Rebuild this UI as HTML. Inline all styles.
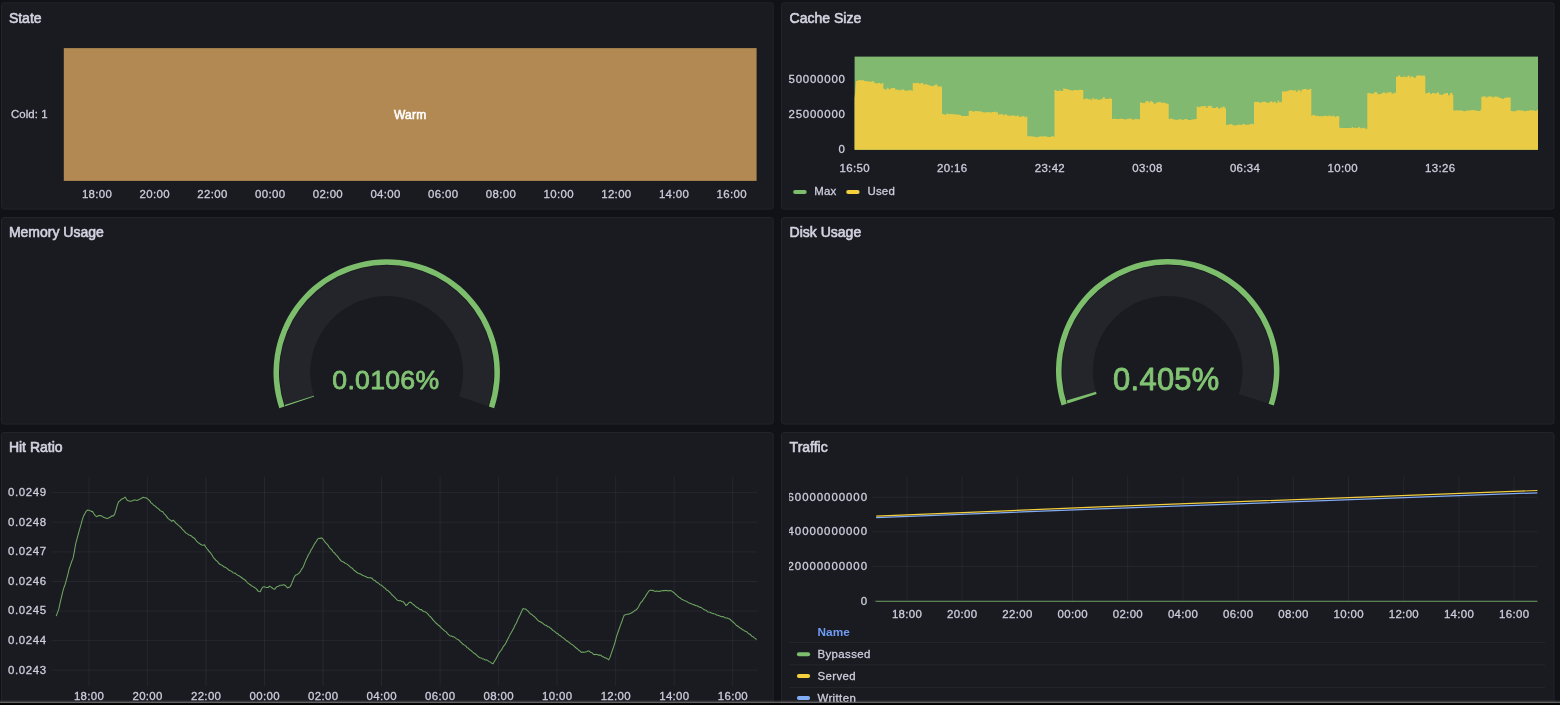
<!DOCTYPE html>
<html><head><meta charset="utf-8"><title>Dashboard</title>
<style>
html,body{margin:0;padding:0;background:#111217;width:1560px;height:705px;overflow:hidden;font-family:"Liberation Sans",sans-serif;}
svg{display:block;position:absolute;left:0;top:0;will-change:transform}
text{font-family:"Liberation Sans",sans-serif}
</style></head><body>
<svg width="1560" height="705" viewBox="0 0 1560 705" font-family="Liberation Sans, sans-serif">
<rect x="1.50" y="2.80" width="771.80" height="206.30" rx="2.5" fill="#1a1b20" stroke="#222429" stroke-width="1"/>
<rect x="1.50" y="217.50" width="771.80" height="206.60" rx="2.5" fill="#1a1b20" stroke="#222429" stroke-width="1"/>
<rect x="1.50" y="432.50" width="771.80" height="287.00" rx="2.5" fill="#1a1b20" stroke="#222429" stroke-width="1"/>
<rect x="781.50" y="2.80" width="772.60" height="206.30" rx="2.5" fill="#1a1b20" stroke="#222429" stroke-width="1"/>
<rect x="781.50" y="217.50" width="772.60" height="206.60" rx="2.5" fill="#1a1b20" stroke="#222429" stroke-width="1"/>
<rect x="781.50" y="432.50" width="772.60" height="287.00" rx="2.5" fill="#1a1b20" stroke="#222429" stroke-width="1"/>
<text x="8.90" y="22.80" font-size="14" fill="#d3d3e1" text-anchor="start" font-weight="normal" stroke="#d3d3e1" stroke-width="0.6">State</text>
<text x="789.60" y="22.80" font-size="14" fill="#d3d3e1" text-anchor="start" font-weight="normal" stroke="#d3d3e1" stroke-width="0.6">Cache Size</text>
<text x="8.90" y="237.40" font-size="14" fill="#d3d3e1" text-anchor="start" font-weight="normal" stroke="#d3d3e1" stroke-width="0.6">Memory Usage</text>
<text x="789.60" y="237.40" font-size="14" fill="#d3d3e1" text-anchor="start" font-weight="normal" stroke="#d3d3e1" stroke-width="0.6">Disk Usage</text>
<text x="8.90" y="452.40" font-size="14" fill="#d3d3e1" text-anchor="start" font-weight="normal" stroke="#d3d3e1" stroke-width="0.6">Hit Ratio</text>
<text x="789.60" y="452.40" font-size="14" fill="#d3d3e1" text-anchor="start" font-weight="normal" stroke="#d3d3e1" stroke-width="0.6">Traffic</text>
<rect x="63.8" y="48.1" width="692.8" height="132.8" fill="#b28952"/>
<text x="11.00" y="118.10" font-size="11.45" fill="#ccccdc" text-anchor="start" font-weight="normal" letter-spacing="0.05"  stroke="#ccccdc" stroke-width="0.3">Cold: 1</text>
<text x="410.23" y="118.80" font-size="12" fill="#ffffff" text-anchor="middle" font-weight="normal" letter-spacing="0.25" stroke="#ffffff" stroke-width="0.55">Warm</text>
<text x="97.08" y="198.10" font-size="11.45" fill="#ccccdc" text-anchor="middle" font-weight="normal" letter-spacing="0.35"  stroke="#ccccdc" stroke-width="0.3">18:00</text>
<text x="154.78" y="198.10" font-size="11.45" fill="#ccccdc" text-anchor="middle" font-weight="normal" letter-spacing="0.35"  stroke="#ccccdc" stroke-width="0.3">20:00</text>
<text x="212.48" y="198.10" font-size="11.45" fill="#ccccdc" text-anchor="middle" font-weight="normal" letter-spacing="0.35"  stroke="#ccccdc" stroke-width="0.3">22:00</text>
<text x="270.18" y="198.10" font-size="11.45" fill="#ccccdc" text-anchor="middle" font-weight="normal" letter-spacing="0.35"  stroke="#ccccdc" stroke-width="0.3">00:00</text>
<text x="327.88" y="198.10" font-size="11.45" fill="#ccccdc" text-anchor="middle" font-weight="normal" letter-spacing="0.35"  stroke="#ccccdc" stroke-width="0.3">02:00</text>
<text x="385.57" y="198.10" font-size="11.45" fill="#ccccdc" text-anchor="middle" font-weight="normal" letter-spacing="0.35"  stroke="#ccccdc" stroke-width="0.3">04:00</text>
<text x="443.28" y="198.10" font-size="11.45" fill="#ccccdc" text-anchor="middle" font-weight="normal" letter-spacing="0.35"  stroke="#ccccdc" stroke-width="0.3">06:00</text>
<text x="500.98" y="198.10" font-size="11.45" fill="#ccccdc" text-anchor="middle" font-weight="normal" letter-spacing="0.35"  stroke="#ccccdc" stroke-width="0.3">08:00</text>
<text x="558.67" y="198.10" font-size="11.45" fill="#ccccdc" text-anchor="middle" font-weight="normal" letter-spacing="0.35"  stroke="#ccccdc" stroke-width="0.3">10:00</text>
<text x="616.38" y="198.10" font-size="11.45" fill="#ccccdc" text-anchor="middle" font-weight="normal" letter-spacing="0.35"  stroke="#ccccdc" stroke-width="0.3">12:00</text>
<text x="674.07" y="198.10" font-size="11.45" fill="#ccccdc" text-anchor="middle" font-weight="normal" letter-spacing="0.35"  stroke="#ccccdc" stroke-width="0.3">14:00</text>
<text x="731.77" y="198.10" font-size="11.45" fill="#ccccdc" text-anchor="middle" font-weight="normal" letter-spacing="0.35"  stroke="#ccccdc" stroke-width="0.3">16:00</text>
<rect x="854.6" y="56.6" width="683.4" height="93.2" fill="#82b970"/>
<path d="M854.6,149.8 L854.6,98.7 L856.0,81.1 L857.9,81.1 L857.9,80.0 L859.3,80.0 L859.3,80.2 L861.7,80.2 L861.7,80.3 L864.1,80.3 L864.1,80.9 L866.5,80.9 L866.5,81.6 L867.9,81.6 L867.9,81.2 L869.3,81.2 L869.3,81.8 L871.7,81.8 L871.7,81.2 L874.1,81.2 L874.1,82.7 L875.5,82.7 L875.5,83.6 L877.9,83.6 L877.9,82.9 L880.3,82.9 L880.3,84.1 L881.7,84.1 L881.7,83.1 L883.1,83.1 L883.1,82.5 L883.3,82.5 L883.3,88.8 L884.7,88.8 L884.7,89.5 L887.1,89.5 L887.1,87.8 L888.5,87.8 L888.5,89.2 L890.9,89.2 L890.9,88.0 L892.8,88.0 L892.8,88.0 L895.2,88.0 L895.2,89.6 L896.6,89.6 L896.6,89.8 L898.5,89.8 L898.5,90.2 L900.4,90.2 L900.4,89.8 L902.3,89.8 L902.3,89.4 L904.2,89.4 L904.2,90.6 L905.6,90.6 L905.6,90.7 L908.0,90.7 L908.0,90.3 L909.4,90.3 L909.4,90.2 L911.8,90.2 L911.8,90.9 L912.7,90.9 L912.7,83.1 L914.6,83.1 L914.6,83.2 L917.0,83.2 L917.0,82.8 L918.9,82.8 L918.9,83.7 L920.8,83.7 L920.8,83.0 L923.2,83.0 L923.2,84.5 L925.6,84.5 L925.6,84.2 L927.5,84.2 L927.5,85.1 L929.4,85.1 L929.4,85.8 L931.8,85.8 L931.8,86.2 L933.2,86.2 L933.2,85.4 L935.1,85.4 L935.1,84.6 L937.5,84.6 L937.5,86.5 L939.9,86.5 L939.9,86.4 L942.0,86.4 L942.0,114.1 L944.4,114.1 L944.4,114.8 L946.3,114.8 L946.3,113.6 L948.2,113.6 L948.2,114.3 L950.1,114.3 L950.1,114.0 L952.5,114.0 L952.5,114.3 L953.9,114.3 L953.9,114.3 L955.8,114.3 L955.8,114.8 L957.2,114.8 L957.2,114.4 L959.1,114.4 L959.1,115.1 L961.0,115.1 L961.0,115.9 L962.9,115.9 L962.9,116.0 L964.8,116.0 L964.8,115.9 L966.7,115.9 L966.7,116.0 L968.6,116.0 L968.6,116.6 L968.7,116.6 L968.7,111.1 L970.1,111.1 L970.1,110.8 L972.5,110.8 L972.5,111.8 L974.4,111.8 L974.4,111.1 L975.8,111.1 L975.8,110.9 L977.2,110.9 L977.2,111.3 L979.6,111.3 L979.6,111.4 L982.0,111.4 L982.0,112.0 L983.4,112.0 L983.4,112.5 L985.8,112.5 L985.8,112.2 L988.2,112.2 L988.2,112.0 L989.6,112.0 L989.6,112.5 L992.0,112.5 L992.0,112.0 L993.9,112.0 L993.9,111.7 L995.8,111.7 L995.8,112.2 L998.0,112.2 L998.0,114.6 L999.4,114.6 L999.4,114.2 L1000.8,114.2 L1000.8,114.2 L1003.2,114.2 L1003.2,115.2 L1004.6,115.2 L1004.6,114.6 L1007.0,114.6 L1007.0,115.6 L1008.9,115.6 L1008.9,116.1 L1010.3,116.1 L1010.3,115.5 L1012.7,115.5 L1012.7,115.5 L1015.1,115.5 L1015.1,116.2 L1017.0,116.2 L1017.0,115.6 L1018.9,115.6 L1018.9,117.1 L1020.8,117.1 L1020.8,116.5 L1022.7,116.5 L1022.7,116.1 L1024.6,116.1 L1024.6,117.2 L1026.0,117.2 L1026.0,116.6 L1027.3,116.6 L1027.3,136.3 L1029.7,136.3 L1029.7,136.3 L1032.1,136.3 L1032.1,136.6 L1034.5,136.6 L1034.5,136.9 L1035.9,136.9 L1035.9,137.3 L1037.8,137.3 L1037.8,136.8 L1039.2,136.8 L1039.2,136.6 L1041.1,136.6 L1041.1,136.3 L1042.5,136.3 L1042.5,136.6 L1043.9,136.6 L1043.9,136.3 L1046.3,136.3 L1046.3,136.8 L1047.7,136.8 L1047.7,137.1 L1049.1,137.1 L1049.1,137.0 L1051.0,137.0 L1051.0,136.2 L1052.4,136.2 L1052.4,136.4 L1054.3,136.4 L1054.3,137.4 L1054.5,137.4 L1054.5,90.0 L1056.4,90.0 L1056.4,91.1 L1058.8,91.1 L1058.8,90.6 L1060.7,90.6 L1060.7,91.0 L1063.1,91.0 L1063.1,88.6 L1065.0,88.6 L1065.0,88.9 L1066.4,88.9 L1066.4,89.1 L1067.8,89.1 L1067.8,89.8 L1069.7,89.8 L1069.7,90.3 L1072.1,90.3 L1072.1,90.4 L1074.0,90.4 L1074.0,90.1 L1075.9,90.1 L1075.9,90.1 L1077.3,90.1 L1077.3,90.2 L1078.7,90.2 L1078.7,89.8 L1081.1,89.8 L1081.1,90.0 L1083.0,90.0 L1083.0,89.7 L1083.3,89.7 L1083.3,99.3 L1085.2,99.3 L1085.2,98.5 L1087.6,98.5 L1087.6,99.3 L1089.5,99.3 L1089.5,99.2 L1090.9,99.2 L1090.9,99.9 L1092.3,99.9 L1092.3,97.7 L1093.7,97.7 L1093.7,99.3 L1095.6,99.3 L1095.6,98.8 L1097.0,98.8 L1097.0,99.7 L1099.4,99.7 L1099.4,99.6 L1101.8,99.6 L1101.8,98.5 L1103.2,98.5 L1103.2,97.1 L1104.6,97.1 L1104.6,98.7 L1107.0,98.7 L1107.0,98.9 L1109.4,98.9 L1109.4,98.1 L1110.8,98.1 L1110.8,99.0 L1112.0,99.0 L1112.0,119.1 L1113.4,119.1 L1113.4,118.8 L1115.8,118.8 L1115.8,118.9 L1118.2,118.9 L1118.2,119.0 L1120.6,119.0 L1120.6,118.5 L1122.0,118.5 L1122.0,118.9 L1124.4,118.9 L1124.4,119.4 L1126.3,119.4 L1126.3,119.0 L1128.7,119.0 L1128.7,118.6 L1131.1,118.6 L1131.1,119.2 L1132.5,119.2 L1132.5,119.7 L1133.9,119.7 L1133.9,119.3 L1135.3,119.3 L1135.3,118.7 L1136.7,118.7 L1136.7,119.3 L1138.6,119.3 L1138.6,119.3 L1140.0,119.3 L1140.0,102.4 L1141.9,102.4 L1141.9,102.9 L1143.8,102.9 L1143.8,103.2 L1145.2,103.2 L1145.2,101.6 L1146.6,101.6 L1146.6,101.1 L1148.5,101.1 L1148.5,102.4 L1149.9,102.4 L1149.9,101.2 L1152.3,101.2 L1152.3,102.3 L1153.7,102.3 L1153.7,103.7 L1156.1,103.7 L1156.1,102.5 L1158.5,102.5 L1158.5,102.0 L1160.9,102.0 L1160.9,102.7 L1163.3,102.7 L1163.3,102.7 L1165.2,102.7 L1165.2,103.2 L1166.6,103.2 L1166.6,103.8 L1168.5,103.8 L1168.5,103.6 L1168.7,103.6 L1168.7,119.1 L1170.1,119.1 L1170.1,118.4 L1172.0,118.4 L1172.0,119.0 L1173.4,119.0 L1173.4,119.4 L1174.8,119.4 L1174.8,119.8 L1176.2,119.8 L1176.2,119.9 L1177.6,119.9 L1177.6,119.5 L1180.0,119.5 L1180.0,119.0 L1181.4,119.0 L1181.4,120.1 L1182.8,120.1 L1182.8,119.8 L1184.2,119.8 L1184.2,119.3 L1185.6,119.3 L1185.6,119.0 L1187.5,119.0 L1187.5,120.0 L1189.9,120.0 L1189.9,119.9 L1191.3,119.9 L1191.3,119.5 L1193.7,119.5 L1193.7,119.2 L1195.6,119.2 L1195.6,119.1 L1196.7,119.1 L1196.7,106.8 L1198.6,106.8 L1198.6,107.2 L1200.5,107.2 L1200.5,106.3 L1202.4,106.3 L1202.4,106.2 L1204.8,106.2 L1204.8,105.9 L1206.2,105.9 L1206.2,108.1 L1207.6,108.1 L1207.6,105.9 L1209.0,105.9 L1209.0,105.8 L1210.9,105.8 L1210.9,106.5 L1212.3,106.5 L1212.3,107.9 L1213.7,107.9 L1213.7,108.0 L1216.1,108.0 L1216.1,107.0 L1218.0,107.0 L1218.0,108.4 L1220.4,108.4 L1220.4,107.4 L1222.8,107.4 L1222.8,106.4 L1224.7,106.4 L1224.7,108.3 L1226.0,108.3 L1226.0,124.7 L1227.4,124.7 L1227.4,125.0 L1228.8,125.0 L1228.8,124.2 L1230.7,124.2 L1230.7,124.1 L1232.1,124.1 L1232.1,124.7 L1233.5,124.7 L1233.5,125.5 L1235.4,125.5 L1235.4,125.3 L1237.3,125.3 L1237.3,124.8 L1239.2,124.8 L1239.2,124.6 L1240.6,124.6 L1240.6,125.2 L1242.0,125.2 L1242.0,124.2 L1243.4,124.2 L1243.4,124.0 L1244.8,124.0 L1244.8,124.7 L1246.7,124.7 L1246.7,124.8 L1249.1,124.8 L1249.1,124.3 L1251.0,124.3 L1251.0,123.8 L1253.4,123.8 L1253.4,124.7 L1254.0,124.7 L1254.0,101.9 L1255.9,101.9 L1255.9,102.1 L1258.3,102.1 L1258.3,101.9 L1259.7,101.9 L1259.7,103.0 L1261.1,103.0 L1261.1,102.3 L1262.5,102.3 L1262.5,101.7 L1264.9,101.7 L1264.9,101.9 L1266.8,101.9 L1266.8,103.0 L1268.7,103.0 L1268.7,102.2 L1270.6,102.2 L1270.6,101.3 L1272.0,101.3 L1272.0,102.3 L1274.4,102.3 L1274.4,101.4 L1275.8,101.4 L1275.8,102.9 L1277.7,102.9 L1277.7,100.4 L1279.1,100.4 L1279.1,102.2 L1281.5,102.2 L1281.5,101.4 L1282.0,101.4 L1282.0,91.6 L1283.4,91.6 L1283.4,91.5 L1285.8,91.5 L1285.8,91.2 L1287.7,91.2 L1287.7,90.4 L1290.1,90.4 L1290.1,90.0 L1292.0,90.0 L1292.0,90.6 L1293.9,90.6 L1293.9,90.3 L1295.8,90.3 L1295.8,91.7 L1297.7,91.7 L1297.7,90.0 L1300.1,90.0 L1300.1,91.5 L1301.5,91.5 L1301.5,89.5 L1303.4,89.5 L1303.4,88.9 L1304.8,88.9 L1304.8,89.0 L1306.7,89.0 L1306.7,90.0 L1308.6,90.0 L1308.6,89.3 L1310.0,89.3 L1310.0,88.8 L1311.3,88.8 L1311.3,115.7 L1312.7,115.7 L1312.7,114.8 L1314.6,114.8 L1314.6,115.8 L1316.5,115.8 L1316.5,115.7 L1317.9,115.7 L1317.9,116.2 L1320.3,116.2 L1320.3,116.0 L1321.7,116.0 L1321.7,116.2 L1324.1,116.2 L1324.1,115.7 L1326.5,115.7 L1326.5,116.2 L1328.4,116.2 L1328.4,115.4 L1330.3,115.4 L1330.3,116.2 L1332.7,116.2 L1332.7,115.4 L1334.1,115.4 L1334.1,116.7 L1336.5,116.7 L1336.5,116.1 L1338.9,116.1 L1338.9,116.7 L1339.3,116.7 L1339.3,127.8 L1340.7,127.8 L1340.7,128.0 L1343.1,128.0 L1343.1,128.1 L1344.5,128.1 L1344.5,128.1 L1346.9,128.1 L1346.9,128.0 L1349.3,128.0 L1349.3,128.0 L1351.7,128.0 L1351.7,127.1 L1353.1,127.1 L1353.1,128.1 L1354.5,128.1 L1354.5,127.7 L1355.9,127.7 L1355.9,128.0 L1357.8,128.0 L1357.8,127.3 L1360.2,127.3 L1360.2,128.3 L1362.6,128.3 L1362.6,127.8 L1364.5,127.8 L1364.5,128.6 L1366.4,128.6 L1366.4,128.9 L1367.3,128.9 L1367.3,93.0 L1369.7,93.0 L1369.7,93.4 L1372.1,93.4 L1372.1,93.7 L1374.0,93.7 L1374.0,92.2 L1375.9,92.2 L1375.9,92.3 L1377.3,92.3 L1377.3,94.2 L1379.7,94.2 L1379.7,93.9 L1381.6,93.9 L1381.6,93.0 L1383.0,93.0 L1383.0,92.6 L1385.4,92.6 L1385.4,93.5 L1386.8,93.5 L1386.8,92.4 L1389.2,92.4 L1389.2,92.3 L1391.6,92.3 L1391.6,93.7 L1393.5,93.7 L1393.5,92.8 L1395.9,92.8 L1395.9,92.4 L1396.0,92.4 L1396.0,76.7 L1397.9,76.7 L1397.9,75.5 L1400.3,75.5 L1400.3,77.0 L1401.7,77.0 L1401.7,77.1 L1403.6,77.1 L1403.6,76.4 L1405.5,76.4 L1405.5,77.2 L1407.4,77.2 L1407.4,75.7 L1409.8,75.7 L1409.8,77.6 L1411.2,77.6 L1411.2,75.9 L1412.6,75.9 L1412.6,77.3 L1414.0,77.3 L1414.0,77.7 L1415.9,77.7 L1415.9,75.7 L1417.8,75.7 L1417.8,75.3 L1419.2,75.3 L1419.2,75.5 L1420.6,75.5 L1420.6,75.8 L1423.0,75.8 L1423.0,75.5 L1424.9,75.5 L1424.9,76.4 L1425.3,76.4 L1425.3,93.4 L1426.7,93.4 L1426.7,93.1 L1428.6,93.1 L1428.6,92.2 L1430.0,92.2 L1430.0,94.0 L1431.9,94.0 L1431.9,93.1 L1433.8,93.1 L1433.8,93.4 L1435.2,93.4 L1435.2,93.2 L1437.1,93.2 L1437.1,92.4 L1439.0,92.4 L1439.0,94.6 L1440.9,94.6 L1440.9,94.9 L1442.3,94.9 L1442.3,94.4 L1443.7,94.4 L1443.7,93.4 L1446.1,93.4 L1446.1,92.9 L1448.0,92.9 L1448.0,95.3 L1449.9,95.3 L1449.9,93.0 L1452.3,93.0 L1452.3,94.8 L1453.3,94.8 L1453.3,110.6 L1454.7,110.6 L1454.7,110.4 L1457.1,110.4 L1457.1,110.3 L1458.5,110.3 L1458.5,110.6 L1460.4,110.6 L1460.4,110.2 L1462.3,110.2 L1462.3,111.1 L1464.2,111.1 L1464.2,111.2 L1466.1,111.2 L1466.1,110.4 L1468.5,110.4 L1468.5,110.6 L1470.9,110.6 L1470.9,109.9 L1473.3,109.9 L1473.3,110.3 L1475.7,110.3 L1475.7,110.8 L1478.1,110.8 L1478.1,111.0 L1480.5,111.0 L1480.5,109.7 L1481.3,109.7 L1481.3,96.8 L1483.7,96.8 L1483.7,96.2 L1485.6,96.2 L1485.6,97.5 L1487.5,97.5 L1487.5,96.4 L1489.9,96.4 L1489.9,96.5 L1492.3,96.5 L1492.3,97.5 L1494.2,97.5 L1494.2,96.5 L1496.1,96.5 L1496.1,96.7 L1498.5,96.7 L1498.5,97.7 L1499.9,97.7 L1499.9,98.0 L1501.8,98.0 L1501.8,99.0 L1503.7,99.0 L1503.7,97.9 L1505.6,97.9 L1505.6,97.4 L1508.0,97.4 L1508.0,97.6 L1509.4,97.6 L1509.4,97.4 L1510.7,97.4 L1510.7,111.1 L1512.1,111.1 L1512.1,111.3 L1513.5,111.3 L1513.5,111.3 L1515.9,111.3 L1515.9,110.6 L1517.8,110.6 L1517.8,110.2 L1520.2,110.2 L1520.2,110.4 L1522.1,110.4 L1522.1,110.6 L1523.5,110.6 L1523.5,111.3 L1525.9,111.3 L1525.9,110.8 L1527.3,110.8 L1527.3,110.7 L1529.7,110.7 L1529.7,109.9 L1531.1,109.9 L1531.1,110.3 L1532.5,110.3 L1532.5,110.4 L1534.9,110.4 L1534.9,110.9 L1536.8,110.9 L1536.8,109.8 L1538.0,109.8 L1538.0,149.8Z" fill="#e9cb45"/>
<clipPath id="yc"><rect x="788.9" y="40" width="90" height="130"/></clipPath>
<text x="845.67" y="83.20" font-size="11.45" fill="#ccccdc" text-anchor="end" font-weight="normal" letter-spacing="0.77"  stroke="#ccccdc" stroke-width="0.3">50000000</text>
<text x="845.67" y="118.10" font-size="11.45" fill="#ccccdc" text-anchor="end" font-weight="normal" letter-spacing="0.77"  stroke="#ccccdc" stroke-width="0.3">25000000</text>
<text x="845.67" y="153.40" font-size="11.45" fill="#ccccdc" text-anchor="end" font-weight="normal" letter-spacing="0.77"  stroke="#ccccdc" stroke-width="0.3">0</text>
<text x="854.67" y="172.40" font-size="11.45" fill="#ccccdc" text-anchor="middle" font-weight="normal" letter-spacing="0.35"  stroke="#ccccdc" stroke-width="0.3">16:50</text>
<text x="952.27" y="172.40" font-size="11.45" fill="#ccccdc" text-anchor="middle" font-weight="normal" letter-spacing="0.35"  stroke="#ccccdc" stroke-width="0.3">20:16</text>
<text x="1049.88" y="172.40" font-size="11.45" fill="#ccccdc" text-anchor="middle" font-weight="normal" letter-spacing="0.35"  stroke="#ccccdc" stroke-width="0.3">23:42</text>
<text x="1147.47" y="172.40" font-size="11.45" fill="#ccccdc" text-anchor="middle" font-weight="normal" letter-spacing="0.35"  stroke="#ccccdc" stroke-width="0.3">03:08</text>
<text x="1245.08" y="172.40" font-size="11.45" fill="#ccccdc" text-anchor="middle" font-weight="normal" letter-spacing="0.35"  stroke="#ccccdc" stroke-width="0.3">06:34</text>
<text x="1342.67" y="172.40" font-size="11.45" fill="#ccccdc" text-anchor="middle" font-weight="normal" letter-spacing="0.35"  stroke="#ccccdc" stroke-width="0.3">10:00</text>
<text x="1440.27" y="172.40" font-size="11.45" fill="#ccccdc" text-anchor="middle" font-weight="normal" letter-spacing="0.35"  stroke="#ccccdc" stroke-width="0.3">13:26</text>
<rect x="793.1" y="190.1" width="13.6" height="4" rx="2" fill="#7dbe6d"/>
<text x="814.20" y="195.30" font-size="11.45" fill="#ccccdc" text-anchor="start" font-weight="normal" letter-spacing="0.25"  stroke="#ccccdc" stroke-width="0.3">Max</text>
<rect x="846.2" y="190.1" width="13.4" height="4" rx="2" fill="#f3cf3e"/>
<text x="867.40" y="195.30" font-size="11.45" fill="#ccccdc" text-anchor="start" font-weight="normal" letter-spacing="0.25"  stroke="#ccccdc" stroke-width="0.3">Used</text>
<path d="M279.29,408.23 A113.20,113.20 0 1 1 494.11,408.23 L488.89,406.50 A107.70,107.70 0 1 0 284.51,406.50Z" fill="#7dbe6d"/>
<path d="M285.27,406.24 A106.90,106.90 0 1 1 488.13,406.24 L459.19,396.62 A76.40,76.40 0 1 0 314.21,396.62Z" fill="#23252b"/>
<path d="M285.27,406.24 A106.90,106.90 0 0 1 284.83,404.90 L313.89,395.65 A76.40,76.40 0 0 0 314.21,396.62Z" fill="#7dbe6d"/>
<text x="385.85" y="388.90" font-size="26.6" fill="#82c474" text-anchor="middle" font-weight="normal" letter-spacing="0.30" stroke="#82c474" stroke-width="0.8" stroke-linejoin="round">0.0106%</text>
<path d="M1061.59,405.59 A111.70,111.70 0 1 1 1273.81,405.59 L1268.59,403.87 A106.20,106.20 0 1 0 1066.81,403.87Z" fill="#7dbe6d"/>
<path d="M1067.57,403.62 A105.40,105.40 0 1 1 1267.83,403.62 L1238.76,394.06 A74.80,74.80 0 1 0 1096.64,394.06Z" fill="#23252b"/>
<path d="M1067.57,403.62 A105.40,105.40 0 0 1 1066.57,400.39 L1095.93,391.77 A74.80,74.80 0 0 0 1096.64,394.06Z" fill="#7dbe6d"/>
<text x="1166.35" y="390.30" font-size="30.9" fill="#82c474" text-anchor="middle" font-weight="normal" letter-spacing="0.30" stroke="#82c474" stroke-width="0.85" stroke-linejoin="round">0.405%</text>
<line x1="51.5" x2="757.5" y1="492.6" y2="492.6" stroke="rgba(204,204,220,0.07)" stroke-width="1"/>
<line x1="51.5" x2="757.5" y1="522.2" y2="522.2" stroke="rgba(204,204,220,0.07)" stroke-width="1"/>
<line x1="51.5" x2="757.5" y1="551.9" y2="551.9" stroke="rgba(204,204,220,0.07)" stroke-width="1"/>
<line x1="51.5" x2="757.5" y1="581.5" y2="581.5" stroke="rgba(204,204,220,0.07)" stroke-width="1"/>
<line x1="51.5" x2="757.5" y1="611.1" y2="611.1" stroke="rgba(204,204,220,0.07)" stroke-width="1"/>
<line x1="51.5" x2="757.5" y1="640.7" y2="640.7" stroke="rgba(204,204,220,0.07)" stroke-width="1"/>
<line x1="51.5" x2="757.5" y1="670.2" y2="670.2" stroke="rgba(204,204,220,0.07)" stroke-width="1"/>
<line x1="88.9" x2="88.9" y1="476.8" y2="686" stroke="rgba(204,204,220,0.07)" stroke-width="1"/>
<line x1="147.4" x2="147.4" y1="476.8" y2="686" stroke="rgba(204,204,220,0.07)" stroke-width="1"/>
<line x1="206.0" x2="206.0" y1="476.8" y2="686" stroke="rgba(204,204,220,0.07)" stroke-width="1"/>
<line x1="264.5" x2="264.5" y1="476.8" y2="686" stroke="rgba(204,204,220,0.07)" stroke-width="1"/>
<line x1="323.0" x2="323.0" y1="476.8" y2="686" stroke="rgba(204,204,220,0.07)" stroke-width="1"/>
<line x1="381.5" x2="381.5" y1="476.8" y2="686" stroke="rgba(204,204,220,0.07)" stroke-width="1"/>
<line x1="440.1" x2="440.1" y1="476.8" y2="686" stroke="rgba(204,204,220,0.07)" stroke-width="1"/>
<line x1="498.6" x2="498.6" y1="476.8" y2="686" stroke="rgba(204,204,220,0.07)" stroke-width="1"/>
<line x1="557.1" x2="557.1" y1="476.8" y2="686" stroke="rgba(204,204,220,0.07)" stroke-width="1"/>
<line x1="615.7" x2="615.7" y1="476.8" y2="686" stroke="rgba(204,204,220,0.07)" stroke-width="1"/>
<line x1="674.2" x2="674.2" y1="476.8" y2="686" stroke="rgba(204,204,220,0.07)" stroke-width="1"/>
<line x1="732.7" x2="732.7" y1="476.8" y2="686" stroke="rgba(204,204,220,0.07)" stroke-width="1"/>
<text x="8.00" y="495.90" font-size="11.45" fill="#ccccdc" text-anchor="start" font-weight="normal" letter-spacing="0.65"  stroke="#ccccdc" stroke-width="0.3">0.0249</text>
<text x="8.00" y="525.50" font-size="11.45" fill="#ccccdc" text-anchor="start" font-weight="normal" letter-spacing="0.65"  stroke="#ccccdc" stroke-width="0.3">0.0248</text>
<text x="8.00" y="555.20" font-size="11.45" fill="#ccccdc" text-anchor="start" font-weight="normal" letter-spacing="0.65"  stroke="#ccccdc" stroke-width="0.3">0.0247</text>
<text x="8.00" y="584.80" font-size="11.45" fill="#ccccdc" text-anchor="start" font-weight="normal" letter-spacing="0.65"  stroke="#ccccdc" stroke-width="0.3">0.0246</text>
<text x="8.00" y="614.40" font-size="11.45" fill="#ccccdc" text-anchor="start" font-weight="normal" letter-spacing="0.65"  stroke="#ccccdc" stroke-width="0.3">0.0245</text>
<text x="8.00" y="644.00" font-size="11.45" fill="#ccccdc" text-anchor="start" font-weight="normal" letter-spacing="0.65"  stroke="#ccccdc" stroke-width="0.3">0.0244</text>
<text x="8.00" y="673.50" font-size="11.45" fill="#ccccdc" text-anchor="start" font-weight="normal" letter-spacing="0.65"  stroke="#ccccdc" stroke-width="0.3">0.0243</text>
<text x="89.08" y="699.60" font-size="11.45" fill="#ccccdc" text-anchor="middle" font-weight="normal" letter-spacing="0.35"  stroke="#ccccdc" stroke-width="0.3">18:00</text>
<text x="147.61" y="699.60" font-size="11.45" fill="#ccccdc" text-anchor="middle" font-weight="normal" letter-spacing="0.35"  stroke="#ccccdc" stroke-width="0.3">20:00</text>
<text x="206.14" y="699.60" font-size="11.45" fill="#ccccdc" text-anchor="middle" font-weight="normal" letter-spacing="0.35"  stroke="#ccccdc" stroke-width="0.3">22:00</text>
<text x="264.67" y="699.60" font-size="11.45" fill="#ccccdc" text-anchor="middle" font-weight="normal" letter-spacing="0.35"  stroke="#ccccdc" stroke-width="0.3">00:00</text>
<text x="323.19" y="699.60" font-size="11.45" fill="#ccccdc" text-anchor="middle" font-weight="normal" letter-spacing="0.35"  stroke="#ccccdc" stroke-width="0.3">02:00</text>
<text x="381.72" y="699.60" font-size="11.45" fill="#ccccdc" text-anchor="middle" font-weight="normal" letter-spacing="0.35"  stroke="#ccccdc" stroke-width="0.3">04:00</text>
<text x="440.26" y="699.60" font-size="11.45" fill="#ccccdc" text-anchor="middle" font-weight="normal" letter-spacing="0.35"  stroke="#ccccdc" stroke-width="0.3">06:00</text>
<text x="498.79" y="699.60" font-size="11.45" fill="#ccccdc" text-anchor="middle" font-weight="normal" letter-spacing="0.35"  stroke="#ccccdc" stroke-width="0.3">08:00</text>
<text x="557.31" y="699.60" font-size="11.45" fill="#ccccdc" text-anchor="middle" font-weight="normal" letter-spacing="0.35"  stroke="#ccccdc" stroke-width="0.3">10:00</text>
<text x="615.84" y="699.60" font-size="11.45" fill="#ccccdc" text-anchor="middle" font-weight="normal" letter-spacing="0.35"  stroke="#ccccdc" stroke-width="0.3">12:00</text>
<text x="674.37" y="699.60" font-size="11.45" fill="#ccccdc" text-anchor="middle" font-weight="normal" letter-spacing="0.35"  stroke="#ccccdc" stroke-width="0.3">14:00</text>
<text x="732.90" y="699.60" font-size="11.45" fill="#ccccdc" text-anchor="middle" font-weight="normal" letter-spacing="0.35"  stroke="#ccccdc" stroke-width="0.3">16:00</text>
<polyline fill="none" stroke="#7dbe6d" stroke-opacity="0.86" stroke-width="1.05" stroke-linejoin="round" points="56.2,616.06 57.5,612.59 58.8,608.9 60.1,602.92 61.4,597.4 62.7,591.91 64.0,587.47 65.3,583.82 66.6,579.18 67.9,574.34 69.2,568.72 70.5,565.1 71.8,561.21 73.1,558.15 74.4,551.35 75.7,543.52 77.0,538.78 78.3,534.06 79.6,529.38 80.9,524.94 82.2,520.08 83.5,516.05 84.8,513.86 86.1,511.3 87.4,510.12 88.7,510.29 90.0,510.65 91.3,511.37 92.6,511.61 93.9,513.82 95.2,515.67 96.5,516.68 97.8,516.01 99.1,515.61 100.4,515.59 101.7,515.91 103.0,517.03 104.3,517.59 105.6,518.08 106.9,518.6 108.2,518.33 109.5,517.46 110.8,516.72 112.1,515.8 113.4,515.92 114.7,514.13 116.0,509.85 117.3,505.13 118.6,501.76 119.9,500.93 121.2,499.45 122.5,498.77 123.8,498.19 125.1,497.05 126.4,499.32 127.7,500.61 129.0,500.89 130.3,501.18 131.6,501.1 132.9,500.43 134.2,500.06 135.5,500.05 136.8,500.39 138.1,499.97 139.4,499.16 140.7,498.81 142.0,498.02 143.3,497.31 144.6,497.78 145.9,497.76 147.2,498.65 148.5,499.66 149.8,500.9 151.1,502.85 152.4,503.75 153.7,505.28 155.0,505.87 156.3,507.21 157.6,508.1 158.9,509.09 160.2,510.62 161.5,511.37 162.8,511.82 164.1,513.79 165.4,514.8 166.7,516.58 168.0,518.38 169.3,519.43 170.6,520.17 171.9,521.4 173.2,520.18 174.5,521.38 175.8,523.15 177.1,524.05 178.4,525.3 179.7,526.37 181.0,527.66 182.3,529.38 183.6,530.37 184.9,531.99 186.2,533.08 187.5,533.83 188.8,534.96 190.1,535.2 191.4,535.96 192.7,537.32 194.0,537.99 195.3,539.25 196.6,541.21 197.9,542.42 199.2,543.19 200.5,544.33 201.8,544.98 203.1,545.32 204.4,544.8 205.7,547.03 207.0,548.77 208.3,550.31 209.6,551.95 210.9,553.46 212.2,555.2 213.5,557.83 214.8,558.86 216.1,560.56 217.4,561.43 218.7,563.22 220.0,564.29 221.3,564.9 222.6,565.6 223.9,566.9 225.2,567.13 226.5,568.08 227.8,569.19 229.1,570.26 230.4,570.86 231.7,571.37 233.0,572.76 234.3,572.93 235.6,573.58 236.9,574.62 238.2,575.6 239.5,576.07 240.8,576.99 242.1,577.98 243.4,579.07 244.7,579.73 246.0,581.0 247.3,582.53 248.6,583.67 249.9,584.44 251.2,585.47 252.5,586.38 253.8,586.98 255.1,587.89 256.4,588.87 257.7,590.68 259.0,591.49 260.3,591.75 261.6,588.72 262.9,587.09 264.2,586.62 265.5,587.34 266.8,587.46 268.1,587.6 269.4,586.12 270.7,586.87 272.0,587.8 273.3,588.7 274.6,589.31 275.9,587.7 277.2,586.48 278.5,586.22 279.8,585.35 281.1,585.28 282.4,585.11 283.7,584.72 285.0,585.14 286.3,586.67 287.6,587.94 288.9,587.29 290.2,586.83 291.5,583.92 292.8,580.75 294.1,577.43 295.4,575.23 296.7,574.74 298.0,574.07 299.3,572.97 300.6,571.11 301.9,568.85 303.2,567.02 304.5,563.68 305.8,560.36 307.1,557.78 308.4,554.73 309.7,552.96 311.0,549.94 312.3,548.09 313.6,545.77 314.9,543.33 316.2,541.54 317.5,539.15 318.8,538.34 320.1,538.51 321.4,537.8 322.7,538.75 324.0,540.55 325.3,542.43 326.6,543.55 327.9,545.06 329.2,547.27 330.5,548.59 331.8,549.9 333.1,551.8 334.4,552.79 335.7,554.59 337.0,555.67 338.3,557.37 339.6,559.21 340.9,560.71 342.2,561.54 343.5,561.96 344.8,563.01 346.1,563.63 347.4,564.34 348.7,565.53 350.0,566.7 351.3,567.58 352.6,568.54 353.9,570.18 355.2,570.99 356.5,572.19 357.8,573.04 359.1,573.48 360.4,574.02 361.7,574.8 363.0,575.59 364.3,576.07 365.6,576.39 366.9,577.29 368.2,577.84 369.5,577.78 370.8,577.86 372.1,578.32 373.4,580.01 374.7,580.2 376.0,581.73 377.3,582.54 378.6,583.24 379.9,584.68 381.2,585.03 382.5,586.17 383.8,587.5 385.1,588.15 386.4,589.92 387.7,590.45 389.0,591.6 390.3,592.75 391.6,594.51 392.9,595.58 394.2,596.98 395.5,598.24 396.8,599.61 398.1,600.56 399.4,600.77 400.7,600.79 402.0,601.49 403.3,601.87 404.6,603.37 405.9,605.45 407.2,604.74 408.5,603.11 409.8,602.05 411.1,602.48 412.4,603.84 413.7,604.73 415.0,605.86 416.3,607.03 417.6,607.67 418.9,608.77 420.2,609.61 421.5,609.6 422.8,611.1 424.1,611.65 425.4,611.85 426.7,612.88 428.0,614.19 429.3,615.86 430.6,616.8 431.9,618.39 433.2,620.09 434.5,621.43 435.8,622.98 437.1,623.97 438.4,625.29 439.7,626.05 441.0,627.67 442.3,628.92 443.6,629.92 444.9,631.14 446.2,631.85 447.5,633.62 448.8,634.85 450.1,635.91 451.4,636.02 452.7,636.76 454.0,636.85 455.3,637.89 456.6,638.86 457.9,639.51 459.2,640.37 460.5,641.8 461.8,643.01 463.1,644.31 464.4,645.16 465.7,645.85 467.0,647.66 468.3,648.06 469.6,649.79 470.9,650.3 472.2,651.51 473.5,652.99 474.8,653.48 476.1,654.56 477.4,655.96 478.7,657.02 480.0,657.69 481.3,658.12 482.6,658.92 483.9,659.07 485.2,660.05 486.5,659.84 487.8,660.64 489.1,661.62 490.4,662.11 491.7,663.2 493.0,663.82 494.3,661.46 495.6,659.49 496.9,656.97 498.2,654.49 499.5,652.29 500.8,650.77 502.1,648.88 503.4,646.32 504.7,644.96 506.0,642.83 507.3,640.0 508.6,637.61 509.9,634.85 511.2,632.72 512.5,630.26 513.8,627.92 515.1,624.97 516.4,623.02 517.7,619.82 519.0,616.92 520.3,614.48 521.6,611.47 522.9,608.61 524.2,609.05 525.5,609.01 526.8,610.1 528.1,611.16 529.4,612.81 530.7,613.95 532.0,614.53 533.3,615.88 534.6,616.74 535.9,618.18 537.2,619.69 538.5,620.93 539.8,621.55 541.1,622.23 542.4,622.93 543.7,624.12 545.0,625.22 546.3,625.31 547.6,626.71 548.9,626.85 550.2,627.96 551.5,628.98 552.8,630.38 554.1,631.04 555.4,632.06 556.7,633.29 558.0,633.81 559.3,635.37 560.6,635.81 561.9,637.14 563.2,637.9 564.5,638.82 565.8,640.09 567.1,640.98 568.4,641.89 569.7,642.89 571.0,643.97 572.3,644.6 573.6,645.61 574.9,646.98 576.2,648.03 577.5,648.97 578.8,650.31 580.1,651.14 581.4,652.4 582.7,651.98 584.0,652.18 585.3,651.99 586.6,651.82 587.9,651.03 589.2,651.02 590.5,652.35 591.8,652.51 593.1,654.0 594.4,654.69 595.7,654.24 597.0,654.52 598.3,655.14 599.6,654.9 600.9,655.21 602.2,656.55 603.5,656.87 604.8,657.89 606.1,657.98 607.4,658.91 608.7,659.85 610.0,657.37 611.3,653.45 612.6,649.79 613.9,645.91 615.2,641.72 616.5,636.66 617.8,632.72 619.1,629.04 620.4,625.35 621.7,622.05 623.0,618.15 624.3,615.05 625.6,614.65 626.9,614.16 628.2,614.2 629.5,613.73 630.8,613.35 632.1,612.55 633.4,611.71 634.7,610.58 636.0,610.01 637.3,608.7 638.6,606.72 639.9,604.05 641.2,602.1 642.5,600.98 643.8,598.61 645.1,596.95 646.4,594.62 647.7,592.8 649.0,590.91 650.3,590.08 651.6,590.49 652.9,590.21 654.2,591.09 655.5,591.47 656.8,591.1 658.1,591.24 659.4,591.39 660.7,590.98 662.0,590.68 663.3,590.54 664.6,590.74 665.9,590.19 667.2,590.87 668.5,590.67 669.8,590.48 671.1,590.69 672.4,591.57 673.7,592.46 675.0,593.73 676.3,594.73 677.6,596.25 678.9,597.18 680.2,597.78 681.5,599.22 682.8,599.71 684.1,600.38 685.4,601.06 686.7,601.33 688.0,602.41 689.3,603.04 690.6,603.44 691.9,604.07 693.2,604.63 694.5,604.87 695.8,605.72 697.1,605.7 698.4,606.5 699.7,607.18 701.0,607.37 702.3,608.37 703.6,609.31 704.9,609.99 706.2,610.32 707.5,611.65 708.8,612.09 710.1,612.29 711.4,613.03 712.7,613.39 714.0,613.8 715.3,614.11 716.6,615.1 717.9,615.22 719.2,615.72 720.5,616.22 721.8,616.86 723.1,616.44 724.4,617.42 725.7,617.98 727.0,617.99 728.3,618.57 729.6,619.0 730.9,620.21 732.2,621.46 733.5,622.3 734.8,623.52 736.1,625.2 737.4,625.96 738.7,626.79 740.0,628.06 741.3,628.56 742.6,629.79 743.9,630.33 745.2,631.33 746.5,631.53 747.8,632.9 749.1,634.06 750.4,634.43 751.7,636.24 753.0,636.56 754.3,637.86 755.6,638.6 756.5,639.6"/>
<line x1="872" x2="1537.4" y1="497.2" y2="497.2" stroke="rgba(204,204,220,0.07)" stroke-width="1"/>
<line x1="872" x2="1537.4" y1="531.8" y2="531.8" stroke="rgba(204,204,220,0.07)" stroke-width="1"/>
<line x1="872" x2="1537.4" y1="566.3" y2="566.3" stroke="rgba(204,204,220,0.07)" stroke-width="1"/>
<line x1="872" x2="1537.4" y1="600.9" y2="600.9" stroke="rgba(204,204,220,0.07)" stroke-width="1"/>
<line x1="906.9" x2="906.9" y1="476.8" y2="601" stroke="rgba(204,204,220,0.07)" stroke-width="1"/>
<line x1="962.1" x2="962.1" y1="476.8" y2="601" stroke="rgba(204,204,220,0.07)" stroke-width="1"/>
<line x1="1017.3" x2="1017.3" y1="476.8" y2="601" stroke="rgba(204,204,220,0.07)" stroke-width="1"/>
<line x1="1072.5" x2="1072.5" y1="476.8" y2="601" stroke="rgba(204,204,220,0.07)" stroke-width="1"/>
<line x1="1127.7" x2="1127.7" y1="476.8" y2="601" stroke="rgba(204,204,220,0.07)" stroke-width="1"/>
<line x1="1182.9" x2="1182.9" y1="476.8" y2="601" stroke="rgba(204,204,220,0.07)" stroke-width="1"/>
<line x1="1238.1" x2="1238.1" y1="476.8" y2="601" stroke="rgba(204,204,220,0.07)" stroke-width="1"/>
<line x1="1293.3" x2="1293.3" y1="476.8" y2="601" stroke="rgba(204,204,220,0.07)" stroke-width="1"/>
<line x1="1348.5" x2="1348.5" y1="476.8" y2="601" stroke="rgba(204,204,220,0.07)" stroke-width="1"/>
<line x1="1403.7" x2="1403.7" y1="476.8" y2="601" stroke="rgba(204,204,220,0.07)" stroke-width="1"/>
<line x1="1458.9" x2="1458.9" y1="476.8" y2="601" stroke="rgba(204,204,220,0.07)" stroke-width="1"/>
<line x1="1514.1" x2="1514.1" y1="476.8" y2="601" stroke="rgba(204,204,220,0.07)" stroke-width="1"/>
<clipPath id="tc"><rect x="788.9" y="480" width="90" height="130"/></clipPath>
<text x="867.95" y="500.80" font-size="11.45" fill="#ccccdc" text-anchor="end" font-weight="normal" letter-spacing="0.95" clip-path="url(#tc)" stroke="#ccccdc" stroke-width="0.3">60000000000</text>
<text x="867.95" y="535.40" font-size="11.45" fill="#ccccdc" text-anchor="end" font-weight="normal" letter-spacing="0.95" clip-path="url(#tc)" stroke="#ccccdc" stroke-width="0.3">40000000000</text>
<text x="867.95" y="569.90" font-size="11.45" fill="#ccccdc" text-anchor="end" font-weight="normal" letter-spacing="0.95" clip-path="url(#tc)" stroke="#ccccdc" stroke-width="0.3">20000000000</text>
<text x="867.95" y="604.50" font-size="11.45" fill="#ccccdc" text-anchor="end" font-weight="normal" letter-spacing="0.95" clip-path="url(#tc)" stroke="#ccccdc" stroke-width="0.3">0</text>
<text x="907.07" y="618.30" font-size="11.45" fill="#ccccdc" text-anchor="middle" font-weight="normal" letter-spacing="0.35"  stroke="#ccccdc" stroke-width="0.3">18:00</text>
<text x="962.27" y="618.30" font-size="11.45" fill="#ccccdc" text-anchor="middle" font-weight="normal" letter-spacing="0.35"  stroke="#ccccdc" stroke-width="0.3">20:00</text>
<text x="1017.47" y="618.30" font-size="11.45" fill="#ccccdc" text-anchor="middle" font-weight="normal" letter-spacing="0.35"  stroke="#ccccdc" stroke-width="0.3">22:00</text>
<text x="1072.67" y="618.30" font-size="11.45" fill="#ccccdc" text-anchor="middle" font-weight="normal" letter-spacing="0.35"  stroke="#ccccdc" stroke-width="0.3">00:00</text>
<text x="1127.88" y="618.30" font-size="11.45" fill="#ccccdc" text-anchor="middle" font-weight="normal" letter-spacing="0.35"  stroke="#ccccdc" stroke-width="0.3">02:00</text>
<text x="1183.08" y="618.30" font-size="11.45" fill="#ccccdc" text-anchor="middle" font-weight="normal" letter-spacing="0.35"  stroke="#ccccdc" stroke-width="0.3">04:00</text>
<text x="1238.27" y="618.30" font-size="11.45" fill="#ccccdc" text-anchor="middle" font-weight="normal" letter-spacing="0.35"  stroke="#ccccdc" stroke-width="0.3">06:00</text>
<text x="1293.47" y="618.30" font-size="11.45" fill="#ccccdc" text-anchor="middle" font-weight="normal" letter-spacing="0.35"  stroke="#ccccdc" stroke-width="0.3">08:00</text>
<text x="1348.67" y="618.30" font-size="11.45" fill="#ccccdc" text-anchor="middle" font-weight="normal" letter-spacing="0.35"  stroke="#ccccdc" stroke-width="0.3">10:00</text>
<text x="1403.88" y="618.30" font-size="11.45" fill="#ccccdc" text-anchor="middle" font-weight="normal" letter-spacing="0.35"  stroke="#ccccdc" stroke-width="0.3">12:00</text>
<text x="1459.08" y="618.30" font-size="11.45" fill="#ccccdc" text-anchor="middle" font-weight="normal" letter-spacing="0.35"  stroke="#ccccdc" stroke-width="0.3">14:00</text>
<text x="1514.27" y="618.30" font-size="11.45" fill="#ccccdc" text-anchor="middle" font-weight="normal" letter-spacing="0.35"  stroke="#ccccdc" stroke-width="0.3">16:00</text>
<polyline fill="none" stroke="#82acf5" stroke-width="1.2" points="876.2,517.7 1100,508.9 1537.4,492.8"/>
<polyline fill="none" stroke="#f3cf3e" stroke-width="1.2" points="876.2,516.2 1100,506.9 1537.4,490.5"/>
<line x1="875.6" x2="1537.4" y1="601.3" y2="601.3" stroke="#7dbe6d" stroke-opacity="0.78" stroke-width="1"/>
<text x="817.60" y="636.20" font-size="11.8" fill="#6f9cf5" text-anchor="start" font-weight="bold" >Name</text>
<line x1="789.5" x2="1545.2" y1="642.6" y2="642.6" stroke="rgba(204,204,220,0.07)" stroke-width="1"/>
<line x1="789.5" x2="1545.2" y1="664.8" y2="664.8" stroke="rgba(204,204,220,0.07)" stroke-width="1"/>
<line x1="789.5" x2="1545.2" y1="687.4" y2="687.4" stroke="rgba(204,204,220,0.07)" stroke-width="1"/>
<rect x="796.9" y="652.3" width="13.2" height="4" rx="2" fill="#7dbe6d"/>
<text x="817.40" y="657.80" font-size="11.45" fill="#ccccdc" text-anchor="start" font-weight="normal" letter-spacing="0.40"  stroke="#ccccdc" stroke-width="0.3">Bypassed</text>
<rect x="796.9" y="674.1" width="13.2" height="4" rx="2" fill="#f3cf3e"/>
<text x="817.40" y="679.60" font-size="11.45" fill="#ccccdc" text-anchor="start" font-weight="normal" letter-spacing="0.40"  stroke="#ccccdc" stroke-width="0.3">Served</text>
<rect x="796.9" y="696.0" width="13.2" height="4" rx="2" fill="#82acf5"/>
<text x="817.40" y="701.50" font-size="11.45" fill="#ccccdc" text-anchor="start" font-weight="normal" letter-spacing="0.40"  stroke="#ccccdc" stroke-width="0.3">Written</text>
<defs><linearGradient id="bg" x1="0" y1="0" x2="0" y2="1"><stop offset="0" stop-color="#888" stop-opacity="0"/><stop offset="1" stop-color="#888" stop-opacity="0.3"/></linearGradient></defs>
<rect x="0" y="699.6" width="1560" height="2.6" fill="url(#bg)"/>
<rect x="0" y="701.8" width="1560" height="1.4" fill="#606063"/>
<rect x="0" y="703.2" width="1560" height="1.8" fill="#020202"/>
</svg>
</body></html>
